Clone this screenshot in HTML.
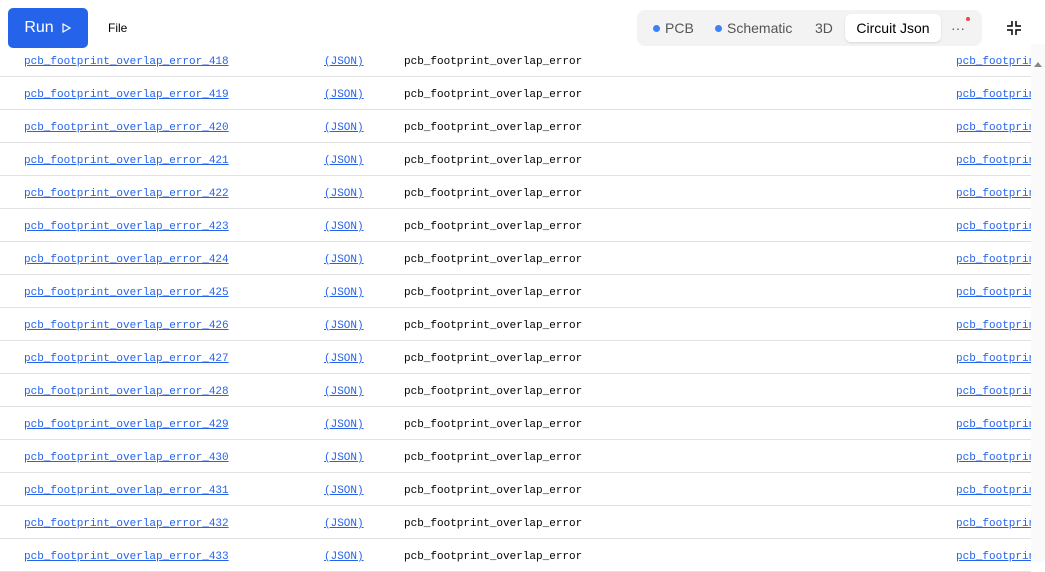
<!DOCTYPE html>
<html><head><style>
body{margin:0;width:1045px;height:562px;overflow:hidden;background:#fff;font-family:"Liberation Sans",sans-serif;position:relative}
.hdr{position:absolute;left:0;top:0;width:1045px;height:44px;background:#fff;z-index:2}
.run{position:absolute;left:8px;top:8px;width:80px;height:40px;background:#2563eb;border-radius:5px;color:#fff;font-size:16px;display:flex;align-items:center;justify-content:center;gap:6px;z-index:3}
.file{position:absolute;left:108px;top:21px;font-size:12px;color:#000;z-index:3}
.tabs{position:absolute;left:637px;top:10px;width:345px;height:36px;background:#f3f3f3;border-radius:8px;z-index:3}
.tab{position:absolute;top:10px;font-size:14px;color:#555}
.dot{display:inline-block;width:7px;height:7px;border-radius:50%;background:#3b82f6;margin-right:5px;vertical-align:1px}
.act{position:absolute;left:845px;top:14px;width:96px;height:28px;background:#fff;border-radius:6px;box-shadow:0 1px 2px rgba(0,0,0,.12);font-size:14px;color:#000;text-align:center;line-height:28px;z-index:4}
.rows{position:absolute;left:0;top:44px;width:1031px}
.r{height:32px;border-bottom:1px solid #e2e2e2;position:relative;font-family:"Liberation Mono",monospace;font-size:11px;overflow:hidden}
.r span{position:absolute;top:12px;white-space:nowrap}
.l{color:#2563eb;text-decoration:underline}
.sb{position:absolute;left:1031px;top:44px;width:14px;height:518px;background:#fafafa}
</style></head><body>
<div class="hdr"></div>
<div class="run">Run <svg width="12" height="12" viewBox="0 0 12 12"><path d="M3 2 L10 6 L3 10 Z" fill="none" stroke="#fff" stroke-width="1.2"/></svg></div>
<div class="file">File</div>
<div class="tabs"></div>
<div class="tab" style="left:653px;top:20px;z-index:4"><span class="dot"></span>PCB</div>
<div class="tab" style="left:715px;top:20px;z-index:4"><span class="dot"></span>Schematic</div>
<div class="tab" style="left:815px;top:20px;z-index:4">3D</div>
<div class="act">Circuit Json</div>
<div style="position:absolute;left:951px;top:20px;font-size:14px;color:#555;z-index:4">···</div>
<div style="position:absolute;left:966px;top:17px;width:4px;height:4px;border-radius:50%;background:#ef4444;z-index:4"></div>
<svg style="position:absolute;left:1006px;top:20px;z-index:4" width="16" height="16" viewBox="0 0 16 16"><path d="M6 1v5H1M10 1v5h5M6 15v-5H1M10 15v-5h5" fill="none" stroke="#000" stroke-width="1.5"/></svg>
<div class="sb"><svg style="position:absolute;left:2px;top:16px" width="10" height="8"><path d="M1 7L5 2L9 7Z" fill="#888"/></svg></div>
<div class="rows">
<div class="r"><span class="l" style="left:24px">pcb_footprint_overlap_error_418</span><span class="l" style="left:324px">(JSON)</span><span style="left:404px">pcb_footprint_overlap_error</span><span class="l" style="left:956px">pcb_footprint</span></div>
<div class="r"><span class="l" style="left:24px">pcb_footprint_overlap_error_419</span><span class="l" style="left:324px">(JSON)</span><span style="left:404px">pcb_footprint_overlap_error</span><span class="l" style="left:956px">pcb_footprint</span></div>
<div class="r"><span class="l" style="left:24px">pcb_footprint_overlap_error_420</span><span class="l" style="left:324px">(JSON)</span><span style="left:404px">pcb_footprint_overlap_error</span><span class="l" style="left:956px">pcb_footprint</span></div>
<div class="r"><span class="l" style="left:24px">pcb_footprint_overlap_error_421</span><span class="l" style="left:324px">(JSON)</span><span style="left:404px">pcb_footprint_overlap_error</span><span class="l" style="left:956px">pcb_footprint</span></div>
<div class="r"><span class="l" style="left:24px">pcb_footprint_overlap_error_422</span><span class="l" style="left:324px">(JSON)</span><span style="left:404px">pcb_footprint_overlap_error</span><span class="l" style="left:956px">pcb_footprint</span></div>
<div class="r"><span class="l" style="left:24px">pcb_footprint_overlap_error_423</span><span class="l" style="left:324px">(JSON)</span><span style="left:404px">pcb_footprint_overlap_error</span><span class="l" style="left:956px">pcb_footprint</span></div>
<div class="r"><span class="l" style="left:24px">pcb_footprint_overlap_error_424</span><span class="l" style="left:324px">(JSON)</span><span style="left:404px">pcb_footprint_overlap_error</span><span class="l" style="left:956px">pcb_footprint</span></div>
<div class="r"><span class="l" style="left:24px">pcb_footprint_overlap_error_425</span><span class="l" style="left:324px">(JSON)</span><span style="left:404px">pcb_footprint_overlap_error</span><span class="l" style="left:956px">pcb_footprint</span></div>
<div class="r"><span class="l" style="left:24px">pcb_footprint_overlap_error_426</span><span class="l" style="left:324px">(JSON)</span><span style="left:404px">pcb_footprint_overlap_error</span><span class="l" style="left:956px">pcb_footprint</span></div>
<div class="r"><span class="l" style="left:24px">pcb_footprint_overlap_error_427</span><span class="l" style="left:324px">(JSON)</span><span style="left:404px">pcb_footprint_overlap_error</span><span class="l" style="left:956px">pcb_footprint</span></div>
<div class="r"><span class="l" style="left:24px">pcb_footprint_overlap_error_428</span><span class="l" style="left:324px">(JSON)</span><span style="left:404px">pcb_footprint_overlap_error</span><span class="l" style="left:956px">pcb_footprint</span></div>
<div class="r"><span class="l" style="left:24px">pcb_footprint_overlap_error_429</span><span class="l" style="left:324px">(JSON)</span><span style="left:404px">pcb_footprint_overlap_error</span><span class="l" style="left:956px">pcb_footprint</span></div>
<div class="r"><span class="l" style="left:24px">pcb_footprint_overlap_error_430</span><span class="l" style="left:324px">(JSON)</span><span style="left:404px">pcb_footprint_overlap_error</span><span class="l" style="left:956px">pcb_footprint</span></div>
<div class="r"><span class="l" style="left:24px">pcb_footprint_overlap_error_431</span><span class="l" style="left:324px">(JSON)</span><span style="left:404px">pcb_footprint_overlap_error</span><span class="l" style="left:956px">pcb_footprint</span></div>
<div class="r"><span class="l" style="left:24px">pcb_footprint_overlap_error_432</span><span class="l" style="left:324px">(JSON)</span><span style="left:404px">pcb_footprint_overlap_error</span><span class="l" style="left:956px">pcb_footprint</span></div>
<div class="r"><span class="l" style="left:24px">pcb_footprint_overlap_error_433</span><span class="l" style="left:324px">(JSON)</span><span style="left:404px">pcb_footprint_overlap_error</span><span class="l" style="left:956px">pcb_footprint</span></div>
</div>
</body></html>
